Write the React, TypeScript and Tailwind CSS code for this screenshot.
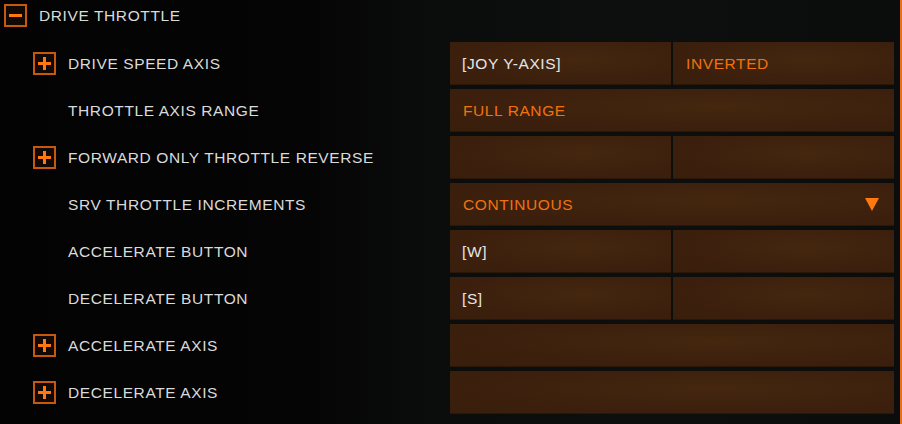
import React from 'react';

// 행 데이터
interface BindRow {
  label: string;
  expandable: boolean;
  kind: 'split' | 'full' | 'select';
  primary?: string;
  secondary?: string;
  primaryOrange?: boolean;
}

const ROWS: BindRow[] = [
  { label: 'DRIVE SPEED AXIS', expandable: true, kind: 'split', primary: '[JOY Y-AXIS]', secondary: 'INVERTED' },
  { label: 'THROTTLE AXIS RANGE', expandable: false, kind: 'full', primary: 'FULL RANGE', primaryOrange: true },
  { label: 'FORWARD ONLY THROTTLE REVERSE', expandable: true, kind: 'split' },
  { label: 'SRV THROTTLE INCREMENTS', expandable: false, kind: 'select', primary: 'CONTINUOUS' },
  { label: 'ACCELERATE BUTTON', expandable: false, kind: 'split', primary: '[W]' },
  { label: 'DECELERATE BUTTON', expandable: false, kind: 'split', primary: '[S]' },
  { label: 'ACCELERATE AXIS', expandable: true, kind: 'full' },
  { label: 'DECELERATE AXIS', expandable: true, kind: 'full' },
];

const FONT = "font-['Liberation_Sans',Arial,sans-serif] text-[15.5px] tracking-[0.6px]";
const FIELD = 'h-full flex items-center bg-[radial-gradient(ellipse_at_60%_40%,#45270f_0%,#3c200d_60%,#381e0b_100%)] shadow-[inset_0_-1px_0_#2a1708]';

const ToggleBox = ({ open }: { open: boolean }) => (
  <div className="w-[23px] h-[23px] border-2 border-[#c4590f] bg-[#120904] flex items-center justify-center shrink-0">
    <svg width="15" height="15" viewBox="0 0 15 15">
      <rect x="1" y="6" width="13" height="3" fill="#ff7812" />
      {!open && <rect x="6" y="1" width="3" height="13" fill="#ff7812" />}
    </svg>
  </div>
);

const Field = ({ text, orange, className }: { text?: string; orange?: boolean; className: string }) => (
  <div className={`${FIELD} ${className} pl-3`}>
    {text && (
      <span className={orange ? 'text-[#f0720f] pl-[1px]' : 'text-[#e6e6e6]'}>{text}</span>
    )}
  </div>
);

const Row = ({ row }: { row: BindRow }) => (
  <div className="h-[43px] flex">
    <div className="w-[450px] flex items-center pl-[33px]">
      {row.expandable ? <ToggleBox open={false} /> : <div className="w-[23px] shrink-0" />}
      <span className="ml-3 text-[#dadada]">{row.label}</span>
    </div>
    <div className="w-[444px] flex gap-[2px]">
      {row.kind === 'split' && (
        <>
          <Field text={row.primary} orange={false} className="w-[221px]" />
          <Field text={row.secondary} orange className="flex-1" />
        </>
      )}
      {row.kind === 'full' && <Field text={row.primary} orange={row.primaryOrange} className="flex-1" />}
      {row.kind === 'select' && (
        <div className={`${FIELD} flex-1 pl-3 pr-[15px] justify-between`}>
          <span className="text-[#f0720f] pl-[1px]">{row.primary}</span>
          <svg width="14" height="13" viewBox="0 0 14 13">
            <polygon points="0,0 14,0 7,13" fill="#ff7812" />
          </svg>
        </div>
      )}
    </div>
  </div>
);

export default function App() {
  return (
    <div className={`w-[902px] h-[424px] overflow-hidden flex bg-[linear-gradient(90deg,#030303_0%,#050505_35%,#0b0c0c_48%,#0d0e0e_70%,#0b0c0c_100%)] ${FONT}`}>
      <div className="w-[900px] pt-1">
        {/* 헤더 */}
        <div className="h-[23px] flex items-center pl-1">
          <ToggleBox open />
          <span className="ml-3 text-[#dadada]">DRIVE THROTTLE</span>
        </div>
        {/* 바인딩 목록 */}
        <div className="mt-[15px] flex flex-col gap-1">
          {ROWS.map((row) => (
            <Row key={row.label} row={row} />
          ))}
        </div>
      </div>
      <div className="w-[2px] h-full bg-[#e8701a]" />
    </div>
  );
}
